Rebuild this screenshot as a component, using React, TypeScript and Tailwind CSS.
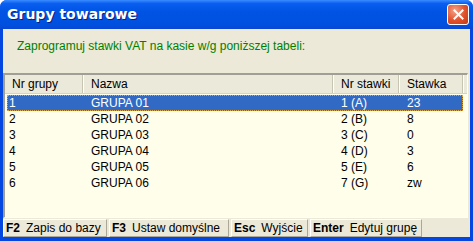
const rows = [
  { nr: "1", name: "GRUPA 01", st: "1 (A)", val: "23" },
  { nr: "2", name: "GRUPA 02", st: "2 (B)", val: "8" },
  { nr: "3", name: "GRUPA 03", st: "3 (C)", val: "0" },
  { nr: "4", name: "GRUPA 04", st: "4 (D)", val: "3" },
  { nr: "5", name: "GRUPA 05", st: "5 (E)", val: "6" },
  { nr: "6", name: "GRUPA 06", st: "7 (G)", val: "zw" },
];

const keys = [
  { k: "F2", label: "Zapis do bazy", w: "w-[104px]" },
  { k: "F3", label: "Ustaw domyślne", w: "w-[120px]" },
  { k: "Esc", label: "Wyjście", w: "w-[77px]" },
  { k: "Enter", label: "Edytuj grupę", w: "w-[112px]" },
];

function CloseButton() {
  return (
    <div className="flex h-[21px] w-[22px] items-center justify-center rounded-[3px] border border-white bg-[radial-gradient(circle_at_35%_30%,#f3a48a,#e0502a_55%,#c33b13)]">
      <svg width="11" height="11" viewBox="0 0 11 11">
        <path d="M1.5 1.5 L9.5 9.5 M9.5 1.5 L1.5 9.5" stroke="white" strokeWidth="2" strokeLinecap="square" />
      </svg>
    </div>
  );
}

export default function App() {
  return (
    <div
      className="flex h-[241px] w-[473px] flex-col overflow-hidden rounded-t-[7px] bg-[#0347e0] text-[12px] text-black"
      style={{ fontFamily: '"Liberation Sans", Arial, sans-serif' }}
    >
      <div className="flex h-[29px] shrink-0 items-center justify-between bg-[linear-gradient(#3a8cff_0%,#0a5ef0_12%,#0054e3_40%,#0050e0_85%,#0a46d0_100%)] pl-[7px] pr-[4px]">
        <span
          className="text-[14px] font-bold text-white [text-shadow:1px_1px_0_#0a1f80]"
          style={{ fontFamily: '"DejaVu Sans", Verdana, sans-serif' }}
        >
          Grupy towarowe
        </span>
        <CloseButton />
      </div>

      <div className="mx-[3px] flex flex-1 flex-col bg-[#ece9d8]">
        <div className="h-[44px] pl-[14px] pt-[8px] text-[#008000]">Zaprogramuj stawki VAT na kasie w/g poniższej tabeli:</div>

        <div className="mr-[2px] flex h-[145px] flex-col border-t-2 border-l-2 border-b border-r border-t-[#a09f95] border-l-[#a09f95] border-b-white border-r-white bg-[#fffeea]">
          <div className="flex h-[19px] shrink-0 border-b border-[#d6d3c3] bg-[#ebe9da]">
            <div className="flex w-[78px] items-center border-r border-[#c7c5b2] pl-[7px]">Nr grupy</div>
            <div className="flex w-[250px] items-center border-r border-[#c7c5b2] border-l border-l-white pl-[7px]">Nazwa</div>
            <div className="flex w-[66px] items-center border-r border-[#c7c5b2] border-l border-l-white pl-[7px]">Nr stawki</div>
            <div className="flex w-[64px] items-center border-r border-[#c7c5b2] border-l border-l-white pl-[7px]">Stawka</div>
            <div className="flex-1 border-l border-l-white" />
          </div>
          <div className="pt-[1px]">
            {rows.map((r, i) => (
              <div
                key={r.nr}
                className={
                  i === 0
                    ? "ml-[2px] flex h-[16px] w-[456px] items-center border border-dotted border-[#e0a040] bg-[#316ac5] text-white"
                    : "ml-[2px] flex h-[16px] w-[456px] items-center border border-transparent"
                }
              >
                <div className="w-[76px] pl-[1px]">{r.nr}</div>
                <div className="w-[250px] pl-[7px]">{r.name}</div>
                <div className="w-[66px] pl-[7px]">{r.st}</div>
                <div className="w-[60px] pl-[7px]">{r.val}</div>
              </div>
            ))}
          </div>
        </div>

        <div className="mt-[1px] flex h-[18px] gap-[2px] whitespace-nowrap">
          {keys.map((k) => (
            <div
              key={k.k}
              className={`${k.w} flex shrink-0 items-center border-t border-l border-r border-b border-t-white border-l-white border-r-[#aca899] border-b-[#aca899] pl-[2px]`}
            >
              <span className="font-bold">{k.k}</span>
              <span className="ml-[6px]">{k.label}</span>
            </div>
          ))}
        </div>
        <div className="flex-1" />
      </div>
      <div className="h-[4px] shrink-0" />
    </div>
  );
}
